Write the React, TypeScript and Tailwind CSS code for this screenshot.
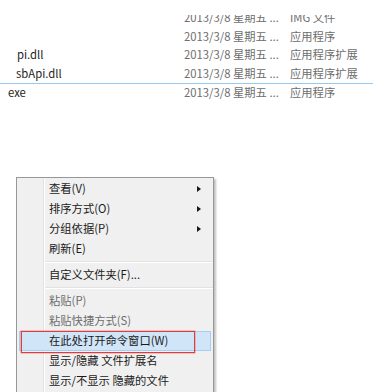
import { Fragment } from "react"

type FileRow = {
  name: string
  pad: string
  date: string
  kind: string
  focused?: boolean
}

const rows: FileRow[] = [
  { name: "", pad: "", date: "2013/3/8 星期五 ...", kind: "IMG 文件" },
  { name: "", pad: "", date: "2013/3/8 星期五 ...", kind: "应用程序" },
  { name: "pi.dll", pad: "pl-[17px]", date: "2013/3/8 星期五 ...", kind: "应用程序扩展" },
  { name: "sbApi.dll", pad: "pl-[16px]", date: "2013/3/8 星期五 ...", kind: "应用程序扩展" },
  { name: "exe", pad: "pl-[8px]", date: "2013/3/8 星期五 ...", kind: "应用程序", focused: true },
]

type MenuEntry =
  | { sep: true }
  | { sep?: false; label: string; sub?: boolean; disabled?: boolean; hot?: boolean }

const menu: MenuEntry[] = [
  { label: "查看(V)", sub: true },
  { label: "排序方式(O)", sub: true },
  { label: "分组依据(P)", sub: true },
  { label: "刷新(E)" },
  { sep: true },
  { label: "自定义文件夹(F)..." },
  { sep: true },
  { label: "粘贴(P)", disabled: true },
  { label: "粘贴快捷方式(S)", disabled: true },
  { label: "在此处打开命令窗口(W)", hot: true },
  { label: "显示/隐藏 文件扩展名" },
  { label: "显示/不显示 隐藏的文件" },
]

function FileList() {
  return (
    <div className="mt-[15px] h-[88px] overflow-hidden">
      <div className="-mt-[7px] flex flex-col">
        {rows.map((r, i) => (
          <div
            key={i}
            className={
              "flex h-[18.7px] w-[373px] items-center whitespace-nowrap text-[11.3px] " +
              (r.focused ? "border-t border-[#99c9ef]" : "")
            }
          >
            <span className={"w-[184px] shrink-0 text-[#1e1e1e] " + r.pad}>{r.name}</span>
            <span className="w-[106px] shrink-0 text-[#6d6d6d]">{r.date}</span>
            <span className="text-[#6d6d6d]">{r.kind}</span>
          </div>
        ))}
      </div>
    </div>
  )
}

function ContextMenu() {
  return (
    <div className="relative ml-[16px] mt-[74px] w-[198px] border border-[#979797] bg-[#f0f0f0] pt-[1px] pb-[4px] shadow-[2px_2px_2px_rgba(0,0,0,0.25)]">
      {/* gutter line */}
      <div className="absolute left-[26px] top-0 bottom-0 w-[1px] bg-[#e2e2e2]" />
      <div className="absolute left-[27px] top-0 bottom-0 w-[1px] bg-white" />
      {menu.map((m, i) => (
        <Fragment key={i}>
          {m.sep ? (
            <div className="flex h-[6px] flex-col justify-center pl-[27px]">
              <div className="h-[1px] bg-[#e2e2e2]" />
              <div className="h-[1px] bg-white" />
            </div>
          ) : (
            <div
              className={
                "relative mx-[2px] flex h-[20px] items-center justify-between pl-[29px] pr-[9px] text-[11.3px] " +
                (m.hot ? "border border-[#a8cdf0] bg-[#d1e5f8]" : "border border-transparent") +
                (m.disabled ? " text-[#6d6d6d]" : " text-[#1a1a1a]")
              }
            >
              <span className="leading-none">{m.label}</span>
              {m.sub && (
                <span className="h-0 w-0 border-y-[3px] border-l-[4px] border-y-transparent border-l-[#1a1a1a]" />
              )}
            </div>
          )}
        </Fragment>
      ))}
      {/* annotation box */}
      <div className="absolute left-[4px] top-[153px] h-[22px] w-[174px] border border-[#e23b3b] shadow-[0_0_0_0.5px_rgba(226,59,59,0.5)]" />
    </div>
  )
}

export default function App() {
  return (
    <div
      className="h-[392px] w-[383px] overflow-hidden bg-white"
      style={{ fontFamily: '"Noto Sans CJK SC", "Noto Sans", sans-serif' }}
    >
      <FileList />
      <ContextMenu />
    </div>
  )
}
